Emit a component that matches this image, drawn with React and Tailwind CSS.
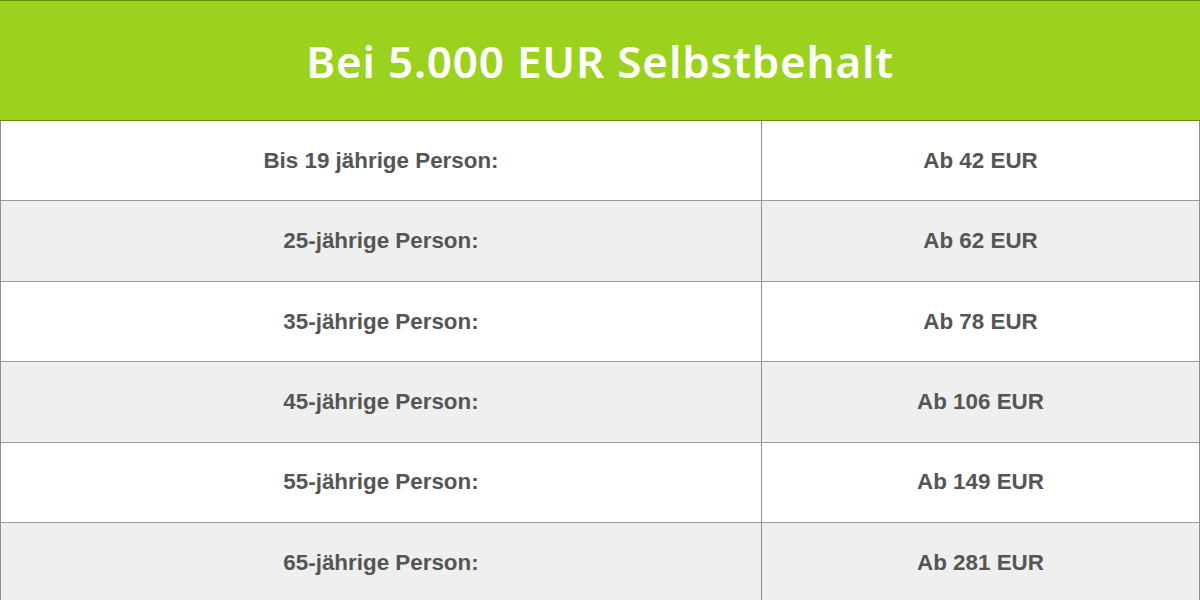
const ROWS = [
  { label: 'Bis 19 jährige Person:', price: 'Ab 42 EUR' },
  { label: '25-jährige Person:', price: 'Ab 62 EUR' },
  { label: '35-jährige Person:', price: 'Ab 78 EUR' },
  { label: '45-jährige Person:', price: 'Ab 106 EUR' },
  { label: '55-jährige Person:', price: 'Ab 149 EUR' },
  { label: '65-jährige Person:', price: 'Ab 281 EUR' },
]

export default function App() {
  return (
    <div className="w-[1200px] h-[600px] overflow-hidden bg-white">
      {/* Header */}
      <div className="h-[121px] bg-[#9ad21d] border-t border-b border-[#5f8a12] flex items-center justify-center">
        <h1
          className="text-white text-[44px] font-semibold tracking-[0.8px] leading-none"
          style={{ fontFamily: '"Noto Sans", "Open Sans", sans-serif' }}
        >
          Bei 5.000 EUR Selbstbehalt
        </h1>
      </div>

      {/* Table */}
      <div
        className="border-l border-r border-[#8f8f8f]"
        style={{ fontFamily: '"Liberation Sans", Arial, sans-serif' }}
      >
        {ROWS.map((row, i) => (
          <div
            key={row.label}
            className={`grid grid-cols-[761px_1fr] h-[80.4px] border-b border-[#9a9a9a] ${i % 2 === 1 ? 'bg-[#efefef]' : 'bg-white'}`}
          >
            <div className="flex items-center justify-center border-r border-[#8f8f8f] text-[22.4px] font-bold text-[#555555]">
              {row.label}
            </div>
            <div className="flex items-center justify-center text-[22.4px] font-bold text-[#555555]">
              {row.price}
            </div>
          </div>
        ))}
      </div>
    </div>
  )
}
